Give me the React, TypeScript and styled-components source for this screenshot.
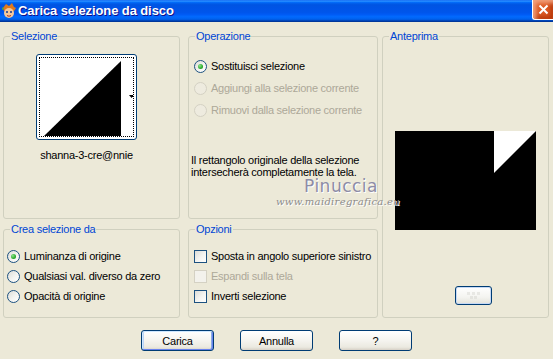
import styled, { createGlobalStyle } from 'styled-components';

const GlobalStyle = createGlobalStyle`
  html, body {
    margin: 0;
    padding: 0;
    background: #ece9d8;
  }
  body {
    font-family: 'Liberation Sans', Arial, sans-serif;
    font-size: 11px;
    letter-spacing: -0.25px;
    color: #000;
  }
`;

const Dialog = styled.div`
  position: relative;
  width: 553px;
  height: 359px;
  overflow: hidden;
  background: #ece9d8;
`;

const TitleBar = styled.div`
  height: 22px;
  display: grid;
  grid-template-columns: 17px 1fr 21px;
  align-items: start;
  background: linear-gradient(
    to bottom,
    #0058ee 0%,
    #3593ff 4%,
    #288eff 6%,
    #127dff 8%,
    #036ffc 10%,
    #0262ee 14%,
    #0057e5 20%,
    #0054e3 24%,
    #0055eb 56%,
    #005bf5 66%,
    #026afe 76%,
    #0062ef 86%,
    #0052d6 92%,
    #0040ab 94%,
    #003092 100%
  );
`;

const TitleText = styled.span`
  margin-left: 1px;
  margin-top: 3px;
  color: #fff;
  font-weight: bold;
  font-size: 13px;
  line-height: 16px;
  letter-spacing: -0.1px;
  text-shadow: 1px 1px #0f1089;
  white-space: nowrap;
`;

const CloseButton = styled.div`
  width: 21px;
  height: 20px;
  box-sizing: border-box;
  border-left: 1px solid #ffffff;
  border-bottom: 1px solid #ffffff;
  border-bottom-left-radius: 3px;
  background: #dd5a24;
  box-shadow: inset 3px 3px 4px #f2a27e, inset -3px -3px 4px #b8380a;
  display: flex;
  align-items: center;
  justify-content: center;
`;

const Body = styled.div`
  padding: 8px 0 0 3px;
`;

const Panels = styled.div`
  display: grid;
  grid-template-columns: 185px 194px 167px;
  grid-template-rows: 189px 95px;
  row-gap: 4px;
`;

const Group = styled.fieldset<{ $w: number; $col: number; $row: string }>`
  grid-column: ${(p) => p.$col};
  grid-row: ${(p) => p.$row};
  width: ${(p) => p.$w}px;
  height: 100%;
  box-sizing: border-box;
  margin: 0;
  padding: 0;
  min-width: 0;
  border: 1px solid #d0d0bf;
  border-radius: 3px;
  display: flex;
  flex-direction: column;
`;

const Legend = styled.legend`
  color: #0046d5;
  margin-left: 6px;
  padding: 0 1px;
  line-height: 13px;
  font-size: 11px;
`;

const SelectionBody = styled.div`
  display: flex;
  flex-direction: column;
  align-items: center;
  padding-right: 10px;
  padding-top: 11px;
`;

const Thumb = styled.div`
  width: 101px;
  height: 86px;
  box-sizing: border-box;
  border: 1px solid #003c74;
  border-radius: 3px;
  background: #fff;
  padding: 2px;
`;

const ThumbFocus = styled.div`
  height: 100%;
  box-sizing: border-box;
  border: 1px dotted #000;
  display: flex;
`;

const Caption = styled.div`
  margin-top: 9px;
  line-height: 13px;
`;

const OptionList = styled.div<{ $top: number; $left: number }>`
  padding-top: ${(p) => p.$top}px;
  padding-left: ${(p) => p.$left}px;
  display: flex;
  flex-direction: column;
`;

const OptionRow = styled.div<{ $h: number; $disabled?: boolean }>`
  height: ${(p) => p.$h}px;
  display: flex;
  align-items: center;
  gap: 4px;
  color: ${(p) => (p.$disabled ? '#aca899' : '#000')};
  white-space: nowrap;
`;

const RadioDot = styled.span<{ $checked?: boolean; $disabled?: boolean }>`
  width: 13px;
  height: 13px;
  box-sizing: border-box;
  border-radius: 50%;
  border: 1px solid ${(p) => (p.$disabled ? '#d4d1c3' : '#1c5180')};
  background: ${(p) =>
    p.$disabled ? '#eeebdf' : 'linear-gradient(135deg, #dcdcd7 0%, #f4f4f1 55%, #fff 100%)'};
  display: flex;
  align-items: center;
  justify-content: center;
  flex-shrink: 0;

  &::after {
    content: '';
    display: ${(p) => (p.$checked ? 'block' : 'none')};
    width: 5px;
    height: 5px;
    border-radius: 50%;
    background: radial-gradient(circle at 35% 35%, #8de28d 0%, #2bab2b 60%, #1a8a1a 100%);
  }
`;

const CheckBox = styled.span<{ $disabled?: boolean }>`
  width: 13px;
  height: 13px;
  box-sizing: border-box;
  border: 1px solid ${(p) => (p.$disabled ? '#d4d1c3' : '#1c5180')};
  background: ${(p) =>
    p.$disabled ? '#f3f2ec' : 'linear-gradient(135deg, #dcdcd7 0%, #f4f4f1 55%, #fff 100%)'};
  flex-shrink: 0;
`;

const Note = styled.div`
  margin-top: 33px;
  padding-left: 2px;
  line-height: 12px;
`;

const PreviewBody = styled.div`
  display: flex;
  flex-direction: column;
  align-items: center;
  padding-top: 88px;
`;

const Preview = styled.svg`
  display: block;
`;

const SmallButton = styled.button`
  margin-top: 56px;
  margin-left: 16px;
  width: 37px;
  height: 19px;
  box-sizing: border-box;
  border: 1px solid #003c74;
  border-radius: 3px;
  background: linear-gradient(to bottom, #fff 0%, #f4f4f0 60%, #e3e2da 100%);
  box-shadow: inset 0 0 0 1px #c6d9f5;
  padding: 0;
  display: flex;
  align-items: center;
  justify-content: center;
`;

const ButtonBar = styled.div`
  margin-top: 12px;
  display: flex;
  justify-content: center;
  gap: 26px;
  padding-right: 3px;
`;

const PushButton = styled.button<{ $default?: boolean }>`
  width: 73px;
  height: 21px;
  box-sizing: border-box;
  border: 1px solid #003c74;
  border-radius: 3px;
  background: linear-gradient(to bottom, #ffffff 0%, #f5f4ef 50%, #ebe9e0 85%, #d6d0c5 100%);
  box-shadow: ${(p) =>
    p.$default
      ? 'inset 1px 1px 0 #cee7ff, inset -1px -1px 0 #6982ee, inset 2px 0 0 #bcd4f6, inset -2px 0 0 #89ade4'
      : 'none'};
  font-family: 'Liberation Sans', Arial, sans-serif;
  font-size: 11px;
  letter-spacing: -0.25px;
  color: #000;
  padding: 0;
`;

const Watermark = styled.div`
  position: absolute;
  left: 272px;
  top: 176px;
  width: 132px;
  display: flex;
  flex-direction: column;
  align-items: center;
  pointer-events: none;
`;

const MarkName = styled.span`
  font-family: 'DejaVu Sans', sans-serif;
  font-size: 17px;
  letter-spacing: 0.5px;
  color: #8d8ca6;
  text-shadow: 1px 1px 0 #fff;
  line-height: 20px;
  margin-left: 6px;
`;

const MarkSite = styled.span`
  font-family: 'DejaVu Serif', serif;
  font-style: italic;
  font-size: 10px;
  letter-spacing: 0.3px;
  color: #8c8c8c;
  text-shadow: 1px 1px 0 #fff;
  line-height: 12px;
`;

function AppIcon() {
  return (
    <svg width="16" height="16" viewBox="0 0 16 16" style={{ marginLeft: 1, marginTop: 3 }}>
      <path d="M2 5 L5 1 L8 3 L11 0 L13 4 L15 5 L13 8 L3 8 Z" fill="#e07a1c" />
      <ellipse cx="8" cy="10" rx="5" ry="5" fill="#f6c79a" />
      <circle cx="6" cy="9" r="1" fill="#1a3a8a" />
      <circle cx="10" cy="9" r="1" fill="#1a3a8a" />
      <path d="M6 12.5 Q8 14 10 12.5" stroke="#b0301c" strokeWidth="1" fill="none" />
      <path d="M1 4 L3 6 L1 7 Z" fill="#3fae49" />
    </svg>
  );
}

function Radio({ label, checked, disabled, h }: { label: string; checked?: boolean; disabled?: boolean; h: number }) {
  return (
    <OptionRow $h={h} $disabled={disabled}>
      <RadioDot $checked={checked} $disabled={disabled} />
      <span>{label}</span>
    </OptionRow>
  );
}

function Check({ label, disabled }: { label: string; disabled?: boolean }) {
  return (
    <OptionRow $h={20} $disabled={disabled}>
      <CheckBox $disabled={disabled} />
      <span>{label}</span>
    </OptionRow>
  );
}

export default function App() {
  return (
    <Dialog>
      <GlobalStyle />
      <TitleBar>
        <AppIcon />
        <TitleText>Carica selezione da disco</TitleText>
        <CloseButton>
          <svg width="11" height="11" viewBox="0 0 11 11">
            <path d="M1.5 1.5 L9.5 9.5 M9.5 1.5 L1.5 9.5" stroke="#ffffff" strokeWidth="2" />
          </svg>
        </CloseButton>
      </TitleBar>
      <Body>
        <Panels>
          <Group $w={177} $col={1} $row="1">
            <Legend>Selezione</Legend>
            <SelectionBody>
              <Thumb>
                <ThumbFocus>
                  <svg width="93" height="78" viewBox="0 0 93 78">
                    <rect width="93" height="78" fill="#fff" />
                    <polygon points="4,78 81,3 81,78" fill="#000" />
                    <polygon points="89,37 94,37 91.5,40" fill="#000" />
                  </svg>
                </ThumbFocus>
              </Thumb>
              <Caption>shanna-3-cre@nnie</Caption>
            </SelectionBody>
          </Group>
          <Group $w={190} $col={2} $row="1">
            <Legend>Operazione</Legend>
            <OptionList $top={12} $left={5}>
              <Radio h={22} checked label="Sostituisci selezione" />
              <Radio h={22} disabled label="Aggiungi alla selezione corrente" />
              <Radio h={22} disabled label="Rimuovi dalla selezione corrente" />
            </OptionList>
            <Note>
              Il rettangolo originale della selezione
              <br />
              intersecherà completamente la tela.
            </Note>
          </Group>
          <Group $w={167} $col={3} $row="1 / span 2">
            <Legend>Anteprima</Legend>
            <PreviewBody>
              <Preview width="141" height="99" viewBox="0 0 141 99">
                <rect width="141" height="99" fill="#000" />
                <polygon points="99,0 141,0 99,42" fill="#fff" />
              </Preview>
              <SmallButton aria-label="Zoom">
                <svg width="15" height="9" viewBox="0 0 15 9">
                  <rect x="1" y="1" width="3" height="3" fill="#e8e8e4" />
                  <rect x="6" y="1" width="3" height="3" fill="#e8e8e4" />
                  <rect x="11" y="1" width="3" height="3" fill="#e8e8e4" />
                  <rect x="4" y="5" width="3" height="3" fill="#e4e4df" />
                  <rect x="8" y="5" width="3" height="3" fill="#e4e4df" />
                </svg>
              </SmallButton>
            </PreviewBody>
          </Group>
          <Group $w={177} $col={1} $row="2">
            <Legend>Crea selezione da</Legend>
            <OptionList $top={10} $left={3}>
              <Radio h={20} checked label="Luminanza di origine" />
              <Radio h={20} label="Qualsiasi val. diverso da zero" />
              <Radio h={20} label="Opacità di origine" />
            </OptionList>
          </Group>
          <Group $w={190} $col={2} $row="2">
            <Legend>Opzioni</Legend>
            <OptionList $top={10} $left={5}>
              <Check label="Sposta in angolo superiore sinistro" />
              <Check disabled label="Espandi sulla tela" />
              <Check label="Inverti selezione" />
            </OptionList>
          </Group>
        </Panels>
        <ButtonBar>
          <PushButton $default>Carica</PushButton>
          <PushButton>Annulla</PushButton>
          <PushButton>?</PushButton>
        </ButtonBar>
      </Body>
      <Watermark>
        <MarkName>Pinuccia</MarkName>
        <MarkSite>www.maidiregrafica.eu</MarkSite>
      </Watermark>
    </Dialog>
  );
}
